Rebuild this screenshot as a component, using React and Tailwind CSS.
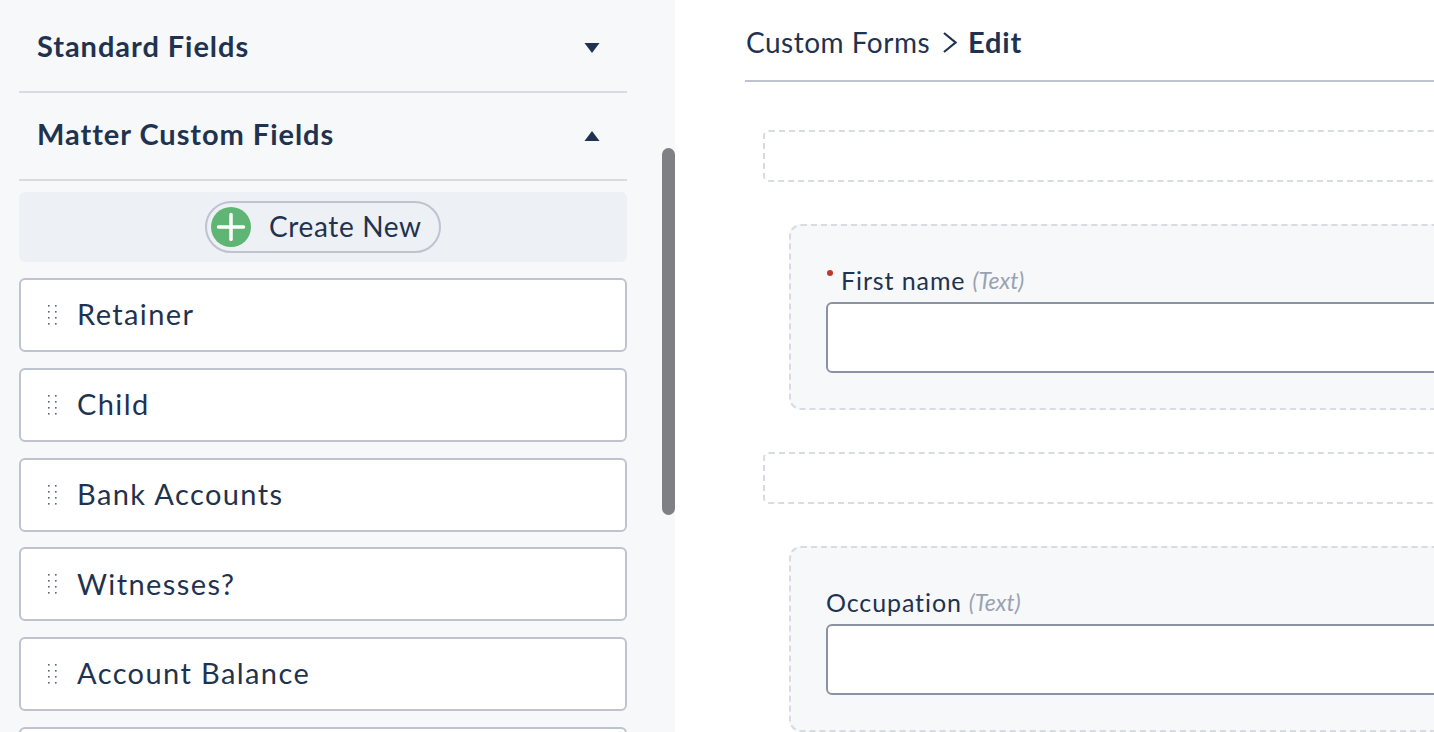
const fields = ['Retainer', 'Child', 'Bank Accounts', 'Witnesses?', 'Account Balance', '']

function DragHandle() {
  return (
    <svg className="w-[12px] h-[22px] shrink-0" viewBox="0 0 12 22" fill="#5b6472">
      {[2, 8, 14, 20].map((y) => (
        <g key={y}>
          <rect x="1" y={y - 1} width="1.6" height="1.6" />
          <rect x="8" y={y - 1} width="1.6" height="1.6" />
        </g>
      ))}
    </svg>
  )
}

function FieldRow({ name }) {
  return (
    <div className="h-[74px] shrink-0 bg-white border-2 border-[#bfc3cf] rounded-[6px] flex items-center pl-[26px] gap-[18px]">
      <DragHandle />
      <span className="pb-[2px] text-[29px] tracking-[1.4px] text-[#1f3350]">{name}</span>
    </div>
  )
}

function SectionHeader({ title, open }) {
  return (
    <div className="h-[88px] shrink-0 border-b-2 border-[#d8dbe1] flex items-center justify-between pl-[18px] pr-[27px]">
      <span className="pb-[5px] text-[29px] font-bold tracking-[0.95px] text-[#1f3350]">{title}</span>
      <svg className="w-[16px] h-[12px]" viewBox="0 0 16 12" fill="#1f3350">
        {open ? <path d="M8 1 L15.5 11 H0.5 Z" /> : <path d="M0.5 1 H15.5 L8 11 Z" />}
      </svg>
    </div>
  )
}

function FormField({ label, required, type }) {
  return (
    <div className="ml-[26px] h-[186px] shrink-0 bg-[#f6f8fa] border-2 border-dashed border-[#d8dbe1] rounded-[12px] pl-[35px] pt-[36px]">
      <div className="h-[40px] flex items-center pb-[3px]">
        {required && <span className="w-[6px] h-[6px] rounded-full bg-[#c0392b] ml-[1px] mr-[8px] mb-[16px]" />}
        <span className="text-[25px] tracking-[0.9px] text-[#1f3350]">{label}</span>
        <span className="ml-[7px] text-[23px] italic text-[#9aa2b1]">({type})</span>
      </div>
      <div className="h-[71px] bg-white border-2 border-[#8a92a3] rounded-[6px] w-[900px]" />
    </div>
  )
}

function DropZone() {
  return <div className="h-[52px] shrink-0 border-2 border-dashed border-[#d8dbe1] rounded-[6px]" />
}

export default function App() {
  return (
    <div className="relative h-screen w-full flex overflow-hidden bg-white font-['Lato',sans-serif]">
      {/* Sidebar */}
      <aside className="w-[675px] shrink-0 bg-[#f6f8fa] pl-[19px] pr-[48px] pt-[5px] flex flex-col">
        <SectionHeader title="Standard Fields" />
        <SectionHeader title="Matter Custom Fields" open />
        <div className="mt-[11px] h-[70px] shrink-0 bg-[#edf0f4] rounded-[6px] flex items-center justify-center">
          <button className="h-[52px] w-[236px] border-2 border-[#bfc3cf] rounded-full flex items-center pl-[4px] gap-[18px]">
            <svg className="w-[40px] h-[40px]" viewBox="0 0 40 40">
              <circle cx="20" cy="20" r="20" fill="#5fb574" />
              <path d="M20 7.5v25M7.5 20h25" stroke="#fff" strokeWidth="3.5" strokeLinecap="round" />
            </svg>
            <span className="pb-[2px] text-[28px] tracking-[0.65px] text-[#1f3350]">Create New</span>
          </button>
        </div>
        <div className="mt-[16px] flex flex-col gap-[15.8px]">
          {fields.map((f, i) => (
            <FieldRow key={i} name={f} />
          ))}
        </div>
      </aside>

      {/* Scroll thumb */}
      <div className="absolute left-[662px] top-[148px] w-[13px] h-[367px] rounded-full bg-[#7f8083]" />

      {/* Main */}
      <main className="flex-1 min-w-0 pl-[70px]">
        <div className="h-[82px] border-b-2 border-[#bfc3cf] flex items-center pt-[4px] text-[28px] text-[#1f3350]">
          <span className="tracking-[0.5px] ml-[1px]">Custom Forms</span>
          <svg className="w-[14px] h-[21px] ml-[13px] mr-[11px]" viewBox="0 0 14 21" fill="none" stroke="#1f3350" strokeWidth="2.2">
            <path d="M1 1l11.5 9.5L1 20" />
          </svg>
          <span className="text-[29px] font-bold tracking-[0.8px]">Edit</span>
        </div>
        <div className="ml-[18px] w-[900px] pt-[48px] flex flex-col gap-[42px]">
          <DropZone />
          <FormField label="First name" required type="Text" />
          <DropZone />
          <FormField label="Occupation" type="Text" />
        </div>
      </main>
    </div>
  )
}
